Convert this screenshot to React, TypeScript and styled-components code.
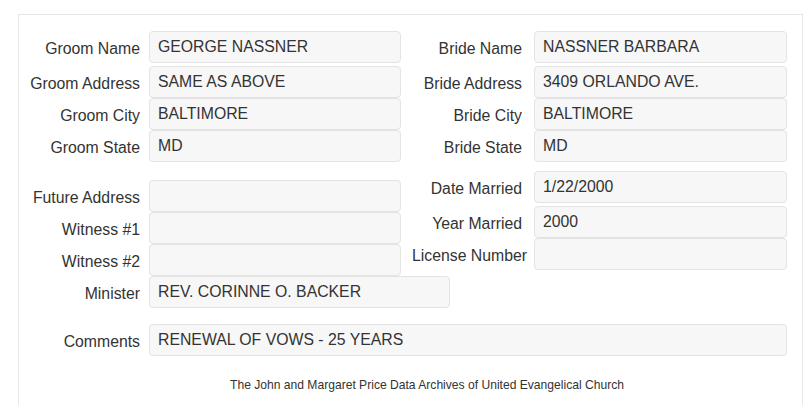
import styled, { createGlobalStyle } from 'styled-components'

const GlobalStyle = createGlobalStyle`
    body {
        margin: 0;
        background: #fff;
        font-family: 'Liberation Sans', Arial, sans-serif;
        color: #333;
    }
`

const Page = styled.div`
    padding: 14px 2px 0 18px;
`

const Panel = styled.div`
    border: 1px solid #e6e6e6;
    border-bottom: none;
    padding: 16px 0 20px 11px;
    min-height: 380px;
    box-sizing: border-box;
`

const Section = styled.div<{ $top?: number }>`
    display: flex;
    align-items: flex-start;
    gap: 11px;
    margin-top: ${(p) => p.$top ?? 0}px;
`

const Column = styled.div<{ $top?: number; $width: number }>`
    display: flex;
    flex-direction: column;
    flex-shrink: 0;
    width: ${(p) => p.$width}px;
    padding-top: ${(p) => p.$top ?? 0}px;
`

const Row = styled.div<{ $gap: number; $after?: number }>`
    display: flex;
    align-items: center;
    gap: ${(p) => p.$gap}px;
    height: 32px;
    margin-bottom: ${(p) => p.$after ?? 0}px;
`

const Label = styled.label`
    width: 110px;
    flex-shrink: 0;
    text-align: right;
    white-space: nowrap;
    font-size: 15.8px;
    padding-top: 3px;
`

const Field = styled.input<{ $width: number }>`
    width: ${(p) => p.$width}px;
    flex-shrink: 0;
    height: 32px;
    box-sizing: border-box;
    margin: 0;
    padding: 0 8px;
    border: 1px solid #e3e3e3;
    border-radius: 4px;
    background: #f7f7f7;
    color: #333;
    font-family: 'Liberation Sans', Arial, sans-serif;
    font-size: 15.8px;
    outline: none;
`

const Footer = styled.div`
    margin-top: 22px;
    padding-left: 22px;
    text-align: center;
    font-size: 12.1px;
    color: #333;
`

type Item = { label: string; value?: string; after?: number; width?: number }

const groom: Item[] = [
    { label: 'Groom Name', value: 'GEORGE NASSNER', after: 3 },
    { label: 'Groom Address', value: 'SAME AS ABOVE' },
    { label: 'Groom City', value: 'BALTIMORE' },
    { label: 'Groom State', value: 'MD' },
]

const bride: Item[] = [
    { label: 'Bride Name', value: 'NASSNER BARBARA', after: 3 },
    { label: 'Bride Address', value: '3409 ORLANDO AVE.' },
    { label: 'Bride City', value: 'BALTIMORE' },
    { label: 'Bride State', value: 'MD' },
]

const others: Item[] = [
    { label: 'Future Address' },
    { label: 'Witness #1' },
    { label: 'Witness #2' },
    { label: 'Minister', value: 'REV. CORINNE O. BACKER', width: 301 },
]

const marriage: Item[] = [
    { label: 'Date Married', value: '1/22/2000', after: 3 },
    { label: 'Year Married', value: '2000' },
    { label: 'License Number' },
]

const Fields = ({ items, gap, width }: { items: Item[]; gap: number; width: number }) => (
    <>
        {items.map((it) => (
            <Row
                key={it.label}
                $gap={gap}
                $after={it.after}
            >
                <Label>{it.label}</Label>
                <Field
                    readOnly
                    $width={it.width ?? width}
                    defaultValue={it.value ?? ''}
                />
            </Row>
        ))}
    </>
)

const App = () => {
    return (
        <Page>
            <GlobalStyle />
            <Panel>
                <Section>
                    <Column $width={371}>
                        <Fields items={groom} gap={9} width={252} />
                    </Column>
                    <Column $width={375}>
                        <Fields items={bride} gap={12} width={253} />
                    </Column>
                </Section>
                <Section $top={9}>
                    <Column $width={371} $top={9}>
                        <Fields items={others} gap={9} width={252} />
                    </Column>
                    <Column $width={375}>
                        <Fields items={marriage} gap={12} width={253} />
                    </Column>
                </Section>
                <Section $top={16}>
                    <Column $width={757}>
                        <Fields items={[{ label: 'Comments', value: 'RENEWAL OF VOWS - 25 YEARS' }]} gap={9} width={638} />
                    </Column>
                </Section>
                <Footer>The John and Margaret Price Data Archives of United Evangelical Church</Footer>
            </Panel>
        </Page>
    )
}

export default App
